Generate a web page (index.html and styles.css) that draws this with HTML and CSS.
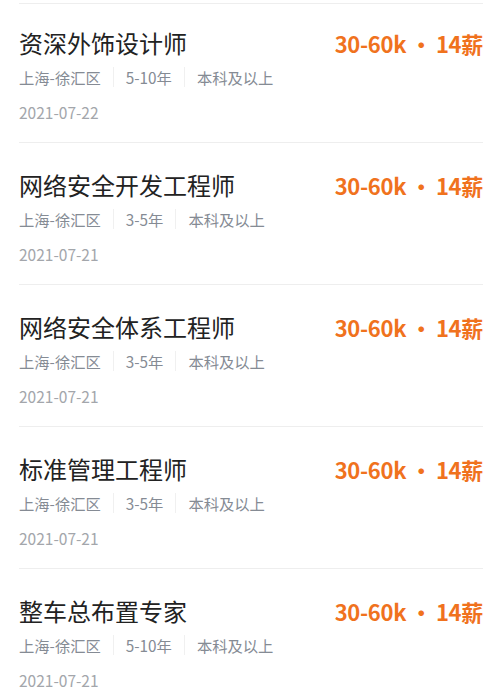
FILE: index.html
```html
<!DOCTYPE html>
<html lang="zh-CN">
<head>
    <meta charset="UTF-8">
    <meta name="viewport" content="width=device-width, initial-scale=1.0">
    <title>职位列表</title>
    <link rel="stylesheet" href="styles.css">
</head>
<body>
    <ul class="job-list">
        <li class="job">
            <div class="job-head">
                <h2 class="job-title">资深外饰设计师</h2>
                <span class="job-salary">30-60k<i class="dot">•</i>14薪</span>
            </div>
            <div class="job-meta">
                <span>上海-徐汇区</span>
                <span>5-10年</span>
                <span>本科及以上</span>
            </div>
            <div class="job-date">2021-07-22</div>
        </li>
        <li class="job">
            <div class="job-head">
                <h2 class="job-title">网络安全开发工程师</h2>
                <span class="job-salary">30-60k<i class="dot">•</i>14薪</span>
            </div>
            <div class="job-meta">
                <span>上海-徐汇区</span>
                <span>3-5年</span>
                <span>本科及以上</span>
            </div>
            <div class="job-date">2021-07-21</div>
        </li>
        <li class="job">
            <div class="job-head">
                <h2 class="job-title">网络安全体系工程师</h2>
                <span class="job-salary">30-60k<i class="dot">•</i>14薪</span>
            </div>
            <div class="job-meta">
                <span>上海-徐汇区</span>
                <span>3-5年</span>
                <span>本科及以上</span>
            </div>
            <div class="job-date">2021-07-21</div>
        </li>
        <li class="job">
            <div class="job-head">
                <h2 class="job-title">标准管理工程师</h2>
                <span class="job-salary">30-60k<i class="dot">•</i>14薪</span>
            </div>
            <div class="job-meta">
                <span>上海-徐汇区</span>
                <span>3-5年</span>
                <span>本科及以上</span>
            </div>
            <div class="job-date">2021-07-21</div>
        </li>
        <li class="job">
            <div class="job-head">
                <h2 class="job-title">整车总布置专家</h2>
                <span class="job-salary">30-60k<i class="dot">•</i>14薪</span>
            </div>
            <div class="job-meta">
                <span>上海-徐汇区</span>
                <span>5-10年</span>
                <span>本科及以上</span>
            </div>
            <div class="job-date">2021-07-21</div>
        </li>
    </ul>
</body>
</html>
```

FILE: styles.css
```css
body, html {
    margin: 0;
    padding: 0;
    background-color: #fff;
    font-family: "Noto Sans CJK SC", "Noto Sans", sans-serif;
}
.job-list {
    list-style-type: none;
    margin: 1px 0 0;
    padding: 0 16px 0 19px;
}
.job {
    border-top: 1px solid #eeeeee;
    padding: 25px 0 20px;
}
.job:first-child {
    margin-top: 3px;
    padding-top: 22px;
}
.job-head {
    display: flex;
    justify-content: space-between;
    align-items: center;
    height: 34px;
}
.job-title {
    margin: 0;
    font-size: 24px;
    font-weight: 400;
    color: #222;
    line-height: 34px;
}
.job-salary {
    font-size: 22px;
    font-weight: 700;
    color: #f0721d;
    line-height: 34px;
    letter-spacing: -0.3px;
}
.job-salary .dot {
    font-style: normal;
    margin: 0 4px;
}
.job-meta {
    display: flex;
    margin-top: 7px;
    font-size: 15.3px;
    line-height: 20px;
    color: #858b94;
}
.job-meta span + span {
    border-left: 1px solid #f0f0f0;
    margin-left: 12px;
    padding-left: 12px;
}
.job-date {
    margin-top: 15px;
    font-size: 15.5px;
    line-height: 20px;
    color: #a3a6ab;
}
```
